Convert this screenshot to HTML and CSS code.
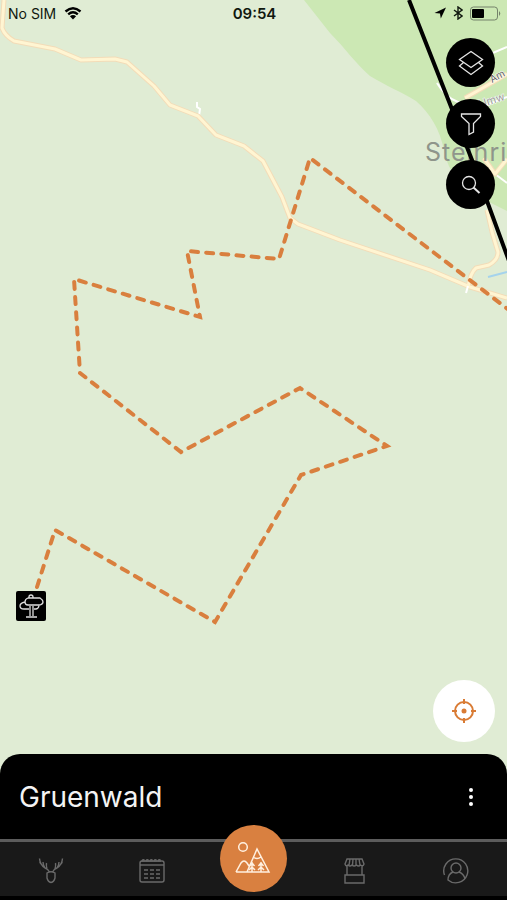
FILE: index.html
```html
<!DOCTYPE html>
<html lang="en">
<head>
    <meta charset="UTF-8">
    <meta name="viewport" content="width=device-width, initial-scale=1.0">
    <title>Gruenwald</title>
    <link rel="stylesheet" href="styles.css">
</head>
<body>
    <div class="app">
        <svg class="map" viewBox="0 0 507 900" preserveAspectRatio="xMinYMin slice" role="img" aria-label="Map">
            <!-- forest areas -->
            <path class="forest" d="M304 0 L330 33 C345 48 356 64 370 76 C386 86 402 92 416 101 C430 113 440 130 444 150 C448 172 462 190 485 200 L507 211 V0 Z"/>

            <!-- roads -->
            <path class="lane" d="M437 83 Q446 98 458 102 L484 106 L507 97"/>
            <path class="lane" d="M488 55 L507 47"/>
            <path class="lane" d="M495 174 L507 183"/>
            <path class="lane" d="M197 102 L197 107 L200 109 L199 116"/>
            <path class="road-edge" d="M465 98 L507 74 M507 159 L495 174 L484 158"/>
            <path class="road" d="M465 98 L507 74 M507 159 L495 174 L484 158"/>
            <path class="road-edge" d="M4 0 L2 28 Q5 36 14 41 L55 49 L81 60 L115 59 L127 62 L154 86 L170 105 L198 116 L216 135 L244 146 L263 161 L282 197 L290 218 L298 224 L340 240 L430 270 L470 287 L507 298"/>
            <path class="road-edge" d="M487 210 L492 232 L498 252 Q498 260 489 265 L476 268 Q470 273 468 288"/>
            <path class="road" d="M4 0 L2 28 Q5 36 14 41 L55 49 L81 60 L115 59 L127 62 L154 86 L170 105 L198 116 L216 135 L244 146 L263 161 L282 197 L290 218 L298 224 L340 240 L430 270 L470 287 L507 298"/>
            <path class="road" d="M487 210 L492 232 L498 252 Q498 260 489 265 L476 268 Q470 273 468 288"/>
            <path class="lane" d="M468 286 L466 293"/>
            <path class="stream" d="M488 277 L507 272"/>

            <text class="street street-dark" transform="translate(492 83) rotate(-28)">Am</text>
            <text class="street" transform="translate(480 108) rotate(-18)">Umw</text>
            <text class="place" x="425" y="161">Steinri</text>

            <path class="border" d="M409 0 L472 160 L509 261"/>
            <path class="route" d="M37 587 L55 530 L215 622 L301 475 L387 446 L300 388 L181 452 L80 373 L74 279 L200 317 L187 251 L279 259 L310 158 L509 310"/>

            <!-- signpost marker -->
            <g class="marker">
                <rect x="16" y="591" width="30" height="30" rx="2"/>
                <path d="M29 598 V597 Q29 595 31 595 Q33 595 33 597 V598 M28 598 H40 Q43 600 43 602 Q43 604 40 605 H28 Q25 605 25 602 Q25 599 28 598 Z M25 602 Q20 603 20 606 Q20 609 24 609 H29 M34 609 H36 Q38 609 39 606 M30 606 V616 M33 606 V616 M26 617 H37"/>
            </g>
        </svg>

        <header class="status-bar">
            <div class="carrier">
                <span>No SIM</span>
                <svg width="18" height="13" viewBox="0 0 18 13">
                    <path class="wifi" d="M1.5 4.5 Q9 -2 16.500 4.500 M4.200 7.400 Q9 3.300 13.800 7.400"/>
                    <path d="M9 12.500 L5.900 9.300 Q9 6.800 12.100 9.300 Z"/>
                </svg>
            </div>
            <time class="clock">09:54</time>
            <div class="indicators">
                <svg width="12" height="12" viewBox="0 0 12 12"><path d="M12 0.500 L6.800 11.500 L6 6.500 L0.500 6 Z"/></svg>
                <svg width="10" height="14" viewBox="0 0 10 14"><path class="bluetooth" d="M1 4 L9 10 L5 13 V1 L9 4 L1 10"/></svg>
                <svg width="31" height="15" viewBox="0 0 31 15">
                    <rect class="battery" x="0.500" y="1" width="27" height="13" rx="3"/>
                    <rect x="2" y="3" width="12" height="9" rx="1"/>
                    <path class="battery-tip" d="M29 5 Q31.500 7.500 29 10 Z"/>
                </svg>
            </div>
        </header>

        <main class="map-controls">
            <div class="tools">
                <button class="tool" type="button" aria-label="Layers">
                    <svg width="26" height="26" viewBox="0 0 26 26"><path d="M13 1.500 L24.500 9.500 L13 17.500 L1.500 9.500 Z M5.500 12.500 L1.500 16 L13 24.500 L24.500 16 L20.500 12.500"/></svg>
                </button>
                <button class="tool" type="button" aria-label="Filter">
                    <svg width="22" height="24" viewBox="0 0 22 24"><path d="M1.500 2 H20.500 V4.500 L13.500 11.500 V20 L9 22.500 V11.500 L1.500 4.500 Z"/></svg>
                </button>
                <button class="tool" type="button" aria-label="Search">
                    <svg width="20" height="20" viewBox="0 0 20 20"><circle cx="8" cy="8" r="6.500"/><path class="handle" d="M12.500 12.500 L18.500 18"/></svg>
                </button>
            </div>
            <button class="locate" type="button" aria-label="My location">
                <svg width="26" height="26" viewBox="0 0 26 26">
                    <circle cx="13" cy="13" r="9"/>
                    <circle class="dot" cx="13" cy="13" r="2.500"/>
                    <path d="M13 1 V6 M13 20 V25 M1 13 H6 M20 13 H25"/>
                </svg>
            </button>
        </main>

        <section class="sheet">
            <h1>Gruenwald</h1>
            <button class="more" type="button" aria-label="More">
                <svg width="6" height="20" viewBox="0 0 6 20"><circle cx="3" cy="3" r="2"/><circle cx="3" cy="10" r="2"/><circle cx="3" cy="17" r="2"/></svg>
            </button>
        </section>

        <nav class="tab-bar">
            <a class="tab" href="#" aria-label="Hunting">
                <svg width="28" height="28" viewBox="0 0 28 28"><path d="M10 16 Q14 13.500 18 16 V21 Q17 25 14 25.500 Q11 25 10 21 Z M12.500 15 Q11 12 8 11 Q3 8 2.500 1.500 M8 11 Q6 8 6 5 M10 12 Q9 8 9.500 6 M5 8 L2.500 5 M15.500 15 Q17 12 20 11 Q25 8 25.500 1.500 M20 11 Q22 8 22 5 M18 12 Q19 8 18.500 6 M23 8 L25.500 5"/></svg>
            </a>
            <a class="tab" href="#" aria-label="Calendar">
                <svg width="28" height="28" viewBox="0 0 28 28"><rect x="2" y="4" width="24" height="21" rx="2"/><path d="M2 8 H26"/><path d="M4 5 Q4 2 6 3 V5 M8 5 Q8 2 10 3 V5 M12 5 Q12 2 14 3 V5 M16 5 Q16 2 18 3 V5 M20 5 Q20 2 22 3 V5"/><path class="days" d="M6 13 H22 M6 17 H22 M6 21 H22"/></svg>
            </a>
            <a class="tab tab-active" href="#" aria-label="Map">
                <svg width="38" height="34" viewBox="0 0 38 34"><circle cx="9" cy="6" r="4.300"/><path d="M2 31 H35 L23 8 L13 31 M19 16 Q23 19 27 16 M2 31 L7 22 Q10 18 13 22 L15 25"/><path class="trees" d="M18 21 V31 M15.500 25 L18 22 L20.500 25 M15 29 L18 26 L21 29 M27 21 V31 M24.500 25 L27 22 L29.500 25 M24 29 L27 26 L30 29"/></svg>
            </a>
            <a class="tab" href="#" aria-label="Shop">
                <svg width="28" height="28" viewBox="0 0 28 28"><path d="M6 2 H21 L23 7 Q22 10 19.500 8 Q17.500 10 15.500 8 Q13 10 11 8 Q9 10 7 8 Q5 10 4 7 Z M9 2 L8 8 M12 2 L11.500 8 M15 2 V8 M18 2 L19 8 M6 9 V18 M21 9 V18 M4 18 H23 V26 H4 Z"/></svg>
            </a>
            <a class="tab" href="#" aria-label="Profile">
                <svg width="28" height="28" viewBox="0 0 28 28"><path d="M2.500 18 A12 12 0 1 1 6 23 Q6 17 11 15 M17 15 Q22 17 23 22"/><circle cx="14" cy="11" r="5"/></svg>
            </a>
        </nav>
    </div>
</body>
</html>
```
FILE: styles.css
```css
* {
    box-sizing: border-box;
    margin: 0;
    padding: 0;
}

body {
    background: #e0ecd4;
    font-family: Inter, "Liberation Sans", sans-serif;
}

button {
    border: none;
    cursor: pointer;
}

svg {
    display: block;
}

.app {
    position: relative;
    display: flex;
    flex-direction: column;
    min-height: 100vh;
    overflow: hidden;
}

/* Map */
.map {
    position: absolute;
    top: 0;
    left: 0;
    width: 100%;
    height: 100%;
    fill: none;
}

.forest {
    fill: #cce8b4;
}

.road-edge {
    stroke: #f3dcb8;
    stroke-width: 5;
    stroke-linejoin: round;
}

.road {
    stroke: #fff5d2;
    stroke-width: 3;
    stroke-linejoin: round;
}

.lane {
    stroke: #fff;
    stroke-width: 2;
}

.stream {
    stroke: #a5d3ec;
    stroke-width: 2;
}

.street {
    font-size: 11px;
    fill: #9a9a98;
    stroke: #fff;
    stroke-width: 1;
    paint-order: stroke;
}

.street-dark {
    font-size: 10px;
    fill: #5f5f5f;
}

.place {
    font-size: 25px;
    letter-spacing: 1px;
    fill: #8f958b;
}

.border {
    stroke: #000;
    stroke-width: 4;
}

.route {
    stroke: #d97f3e;
    stroke-width: 4;
    stroke-linecap: round;
    stroke-dasharray: 7 8.2;
}

.marker rect {
    fill: #000;
}

.marker path {
    stroke: #ddd;
    stroke-width: 1.3;
}

/* Status bar */
.status-bar {
    position: relative;
    display: grid;
    grid-template-columns: 1fr auto 1fr;
    align-items: center;
    height: 28px;
    padding: 0 6px 2px 8px;
    font-size: 14px;
    color: #10180f;
}

.carrier,
.indicators {
    display: flex;
    align-items: center;
    gap: 8px;
}

.indicators {
    gap: 7px;
    justify-content: flex-end;
}

.clock {
    font-size: 15px;
    font-weight: 600;
}

.wifi {
    fill: none;
    stroke: #000;
    stroke-width: 2.4;
}

.bluetooth {
    fill: none;
    stroke: #10180f;
    stroke-width: 1.4;
}

.battery {
    fill: none;
    stroke: #74826a;
}

.battery-tip {
    fill: #74826a;
}

/* Buttons over the map */
.map-controls {
    position: relative;
    display: flex;
    flex: 1;
    flex-direction: column;
    justify-content: space-between;
    align-items: flex-end;
    padding: 10px 12px 12px;
}

.tools {
    display: flex;
    flex-direction: column;
    gap: 12px;
}

.tool,
.locate {
    display: flex;
    align-items: center;
    justify-content: center;
    border-radius: 50%;
}

.tool {
    width: 49px;
    height: 49px;
    background: #000;
}

.tool svg {
    fill: none;
    stroke: #e6e6e6;
    stroke-width: 1.3;
}

.tool .handle {
    stroke-width: 2;
}

.locate {
    width: 62px;
    height: 62px;
    background: #fff;
}

.locate svg {
    fill: none;
    stroke: #d97b34;
    stroke-width: 2;
}

.locate .dot {
    fill: #d97b34;
    stroke: none;
}

/* Bottom sheet */
.sheet {
    position: relative;
    display: flex;
    align-items: center;
    justify-content: space-between;
    height: 86px;
    padding: 0 28px 0 19px;
    background: #000;
    border-radius: 20px 20px 0 0;
    color: #f4f4f4;
}

.sheet h1 {
    font-size: 28px;
    font-weight: 400;
}

.more {
    padding: 5px;
    background: none;
}

.more svg {
    fill: #fff;
}

/* Tab bar */
.tab-bar {
    position: relative;
    display: grid;
    grid-template-columns: repeat(5, 1fr);
    align-items: center;
    justify-items: center;
    height: 61px;
    margin-top: -1px;
    background: #191919;
    border-top: 3px solid #5c5c5c;
    border-bottom: 4px solid #000;
}

.tab svg {
    fill: none;
    stroke: #6a6a6a;
    stroke-width: 1.4;
}

.tab:not(.tab-active) {
    padding-top: 3px;
}

.tab .days {
    stroke-dasharray: 4 2;
}

.tab-active {
    display: flex;
    align-items: center;
    justify-content: center;
    width: 67px;
    height: 67px;
    margin-top: -22px;
    background: #d98040;
    border-radius: 50%;
}

.tab-active svg {
    stroke: #fff0e0;
    stroke-width: 1.5;
}
```
